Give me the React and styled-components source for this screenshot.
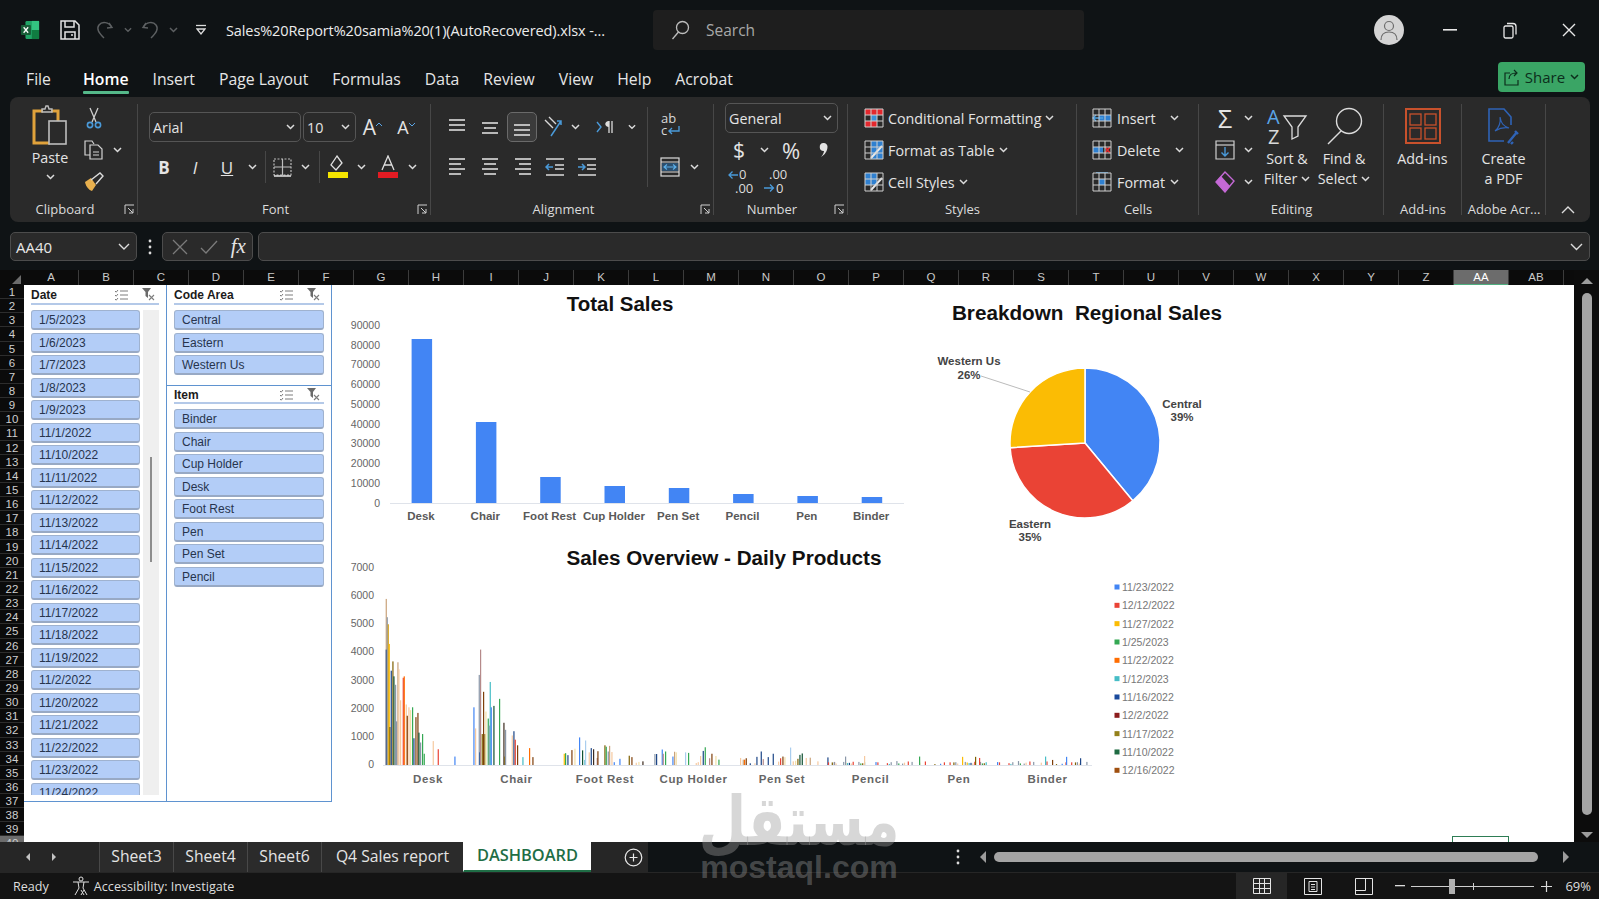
import React from 'react';
import styled, { createGlobalStyle } from 'styled-components';

const UI = '"Open Sans", "Noto Sans", sans-serif';
const ARIAL = '"Liberation Sans", Arial, sans-serif';

const GlobalStyle = createGlobalStyle`
  html, body { margin: 0; padding: 0; background: #0f1315; }
  body { font-family: ${UI}; overflow: hidden; }
  * { box-sizing: border-box; }
`;

const Page = styled.div`
  position: relative;
  width: 1599px;
  height: 899px;
  overflow: hidden;
  background: #0f1315;
  color: #e8e8e8;
  display: flex;
  flex-direction: column;
`;

/* title bar */
const TitleBar = styled.div`
  height: 60px;
  display: flex;
  align-items: center;
`;

const Slot = styled.div`
  width: ${(p) => p.$w}px;
  flex: none;
  height: 100%;
  display: flex;
  align-items: center;
  justify-content: ${(p) => p.$justify || 'center'};
  gap: ${(p) => p.$gap || 0}px;
  margin-left: ${(p) => p.$ml || 0}px;
  padding-left: ${(p) => p.$pl || 0}px;
  padding-right: ${(p) => p.$pr || 0}px;
`;

const DocTitle = styled.div`
  width: 427px;
  flex: none;
  font-size: 14.5px;
  white-space: nowrap;
  color: #ececec;
  letter-spacing: -0.1px;
`;

const SearchBox = styled.div`
  width: 431px;
  height: 40px;
  flex: none;
  background: #1e1e1e;
  border-radius: 4px;
  display: flex;
  align-items: center;
  gap: 16px;
  padding-left: 17px;
  font-size: 15.5px;
  color: #a8a8a8;
`;

const Avatar = styled.div`
  width: 30px;
  height: 30px;
  flex: none;
  margin-left: 290px;
  border-radius: 50%;
  background: #d4d4d4;
  display: flex;
  align-items: center;
  justify-content: center;
`;

/* tabs */
const TabRow = styled.div`
  height: 37px;
  display: flex;
  align-items: center;
  padding-left: 26px;
  font-size: 15.75px;
`;

const Tab = styled.div`
  position: relative;
  margin-right: ${(p) => p.$gap || 24}px;
  height: 37px;
  line-height: 39px;
  color: ${(p) => (p.$active ? '#fff' : '#e6e6e6')};
  font-weight: ${(p) => (p.$active ? 600 : 400)};
  white-space: nowrap;
  &::after {
    content: '';
    display: ${(p) => (p.$active ? 'block' : 'none')};
    position: absolute;
    left: 0;
    right: 0;
    bottom: 3px;
    height: 3px;
    background: #55b98a;
    border-radius: 1px;
  }
`;

const ShareButton = styled.div`
  margin-left: auto;
  margin-right: 14px;
  width: 87px;
  height: 30px;
  margin-top: -4px;
  background: #3aa565;
  border-radius: 4px;
  color: #0c2e1c;
  font-size: 15px;
  display: flex;
  align-items: center;
  justify-content: center;
  gap: 5px;
`;

/* ribbon */
const Ribbon = styled.div`
  height: 125px;
  margin: 0 9px 0 10px;
  background: #2a2a2a;
  border-radius: 8px;
  display: flex;
  font-size: 14.3px;
  color: #e4e4e4;
`;

const Group = styled.div`
  width: ${(p) => p.$w}px;
  flex: none;
  display: flex;
  flex-direction: column;
  position: relative;
  &::after {
    content: '';
    display: ${(p) => (p.$last ? 'none' : 'block')};
    position: absolute;
    right: 0;
    top: 7px;
    bottom: 7px;
    width: 1px;
    background: #474747;
  }
`;

const GroupBody = styled.div`
  flex: 1;
  min-height: 0;
  display: flex;
  padding-left: ${(p) => p.$pad || 0}px;
  padding-top: ${(p) => p.$top ?? 5}px;
`;

const Stack = styled.div`
  display: flex;
  flex-direction: column;
`;

const Row = styled.div`
  height: ${(p) => p.$h || 32}px;
  display: flex;
  align-items: center;
`;

const GroupLabel = styled.div`
  height: 22px;
  margin-bottom: 2px;
  display: flex;
  align-items: center;
  font-size: 13px;
  color: #dcdcdc;
`;

const LabelText = styled.div`
  flex: 1;
  text-align: center;
  white-space: nowrap;
`;

const Launcher = styled.div`
  width: 18px;
  flex: none;
  display: flex;
  justify-content: center;
`;

const BigCol = styled.div`
  width: ${(p) => p.$w}px;
  flex: none;
  display: flex;
  flex-direction: column;
  align-items: center;
  text-align: center;
  line-height: 20px;
  white-space: nowrap;
`;

const BigIcon = styled.div`
  height: ${(p) => p.$h || 44}px;
  display: flex;
  align-items: center;
  justify-content: center;
`;

const TextLine = styled.div`
  display: flex;
  align-items: center;
  gap: 4px;
  white-space: nowrap;
  margin-left: ${(p) => p.$ml || 0}px;
  width: ${(p) => (p.$w ? `${p.$w}px` : 'auto')};
  justify-content: ${(p) => (p.$w ? 'space-between' : 'flex-start')};
`;

const Select = styled.div`
  width: ${(p) => p.$w}px;
  height: 30px;
  flex: none;
  margin-right: ${(p) => p.$mr || 0}px;
  border: 1px solid #555;
  border-radius: 5px;
  display: flex;
  align-items: center;
  justify-content: space-between;
  padding: 0 5px 0 3px;
  font-size: 14.3px;
`;

const Glyph = styled.span`
  font-family: ${(p) => p.$font || UI};
  font-size: ${(p) => p.$size || 17}px;
  font-weight: ${(p) => p.$weight || 400};
  font-style: ${(p) => (p.$italic ? 'italic' : 'normal')};
  color: ${(p) => p.$color || '#e4e4e4'};
  text-decoration: ${(p) => (p.$under ? 'underline' : 'none')};
  line-height: 1;
`;

const Divider = styled.div`
  width: 1px;
  height: 100%;
  background: #474747;
`;

const DividerSlot = styled.div`
  width: ${(p) => p.$w}px;
  flex: none;
  height: ${(p) => p.$h || 100}%;
  display: flex;
  justify-content: center;
`;

const PressedBox = styled.div`
  width: 30px;
  height: 30px;
  border: 1px solid #6a6a6a;
  border-radius: 5px;
  background: #3b3b3b;
  display: flex;
  align-items: flex-end;
  justify-content: center;
  padding-bottom: 4px;
`;

/* formula bar */
const FormulaBar = styled.div`
  height: 29px;
  margin: 10px 9px 9px 10px;
  display: flex;
  align-items: stretch;
`;

const NameBox = styled.div`
  width: 127px;
  flex: none;
  background: #2a2a2a;
  border: 1px solid #4c4c4c;
  border-radius: 5px;
  display: flex;
  align-items: center;
  justify-content: space-between;
  padding: 0 6px 0 5px;
  font-size: 15px;
`;

const FxBox = styled.div`
  width: 91px;
  flex: none;
  background: #2a2a2a;
  border: 1px solid #4c4c4c;
  border-radius: 5px;
  display: flex;
  align-items: center;
  justify-content: space-around;
  padding: 0 0 0 3px;
  margin-right: 5px;
`;

const FormulaInput = styled.div`
  flex: 1;
  background: #2a2a2a;
  border: 1px solid #4c4c4c;
  border-radius: 5px;
  display: flex;
  align-items: center;
  justify-content: flex-end;
  padding-right: 6px;
`;

/* sheet */
const ColumnRow = styled.div`
  height: 15px;
  padding-left: 24px;
  display: flex;
  background: #0b0b0b;
  position: relative;
`;

const Corner = styled.div`
  position: absolute;
  left: 12px;
  bottom: 1px;
  width: 0;
  height: 0;
  border-style: solid;
  border-width: 0 0 9px 9px;
  border-color: transparent transparent #6c6c6c transparent;
`;

const ColHead = styled.div`
  width: 55px;
  flex: none;
  font-family: ${ARIAL};
  font-size: 11.5px;
  line-height: 15px;
  text-align: center;
  color: ${(p) => (p.$on ? '#fff' : '#c9c9c9')};
  background: ${(p) => (p.$on ? '#6c6c6c' : 'transparent')};
  border-right: 1px solid #3c3c3c;
  box-shadow: ${(p) => (p.$on ? 'inset 0 -1px 0 #4fae7f' : 'none')};
`;

const SheetRow = styled.div`
  height: 557px;
  display: flex;
  position: relative;
`;

const RowHeads = styled.div`
  width: 24px;
  flex: none;
  background: #0b0b0b;
  overflow: hidden;
`;

const RowHead = styled.div`
  height: 14.15px;
  font-family: ${ARIAL};
  font-size: 11.5px;
  line-height: 14px;
  text-align: center;
  color: #cfcfcf;
  background: ${(p) => (p.$on ? '#6c6c6c' : 'transparent')};
  border-bottom: 1px solid #2d2d2d;
`;

const Canvas = styled.div`
  width: 1550px;
  flex: none;
  background: #fff;
  position: relative;
  display: flex;
  align-items: flex-start;
  color: #222;
  font-family: ${ARIAL};
`;

const DatePanel = styled.div`
  width: 142px;
  height: 517px;
  flex: none;
  padding: 0 7px;
  border-bottom: 1.5px solid #5f93d0;
  overflow: hidden;
`;

const CodePanel = styled.div`
  width: 166px;
  height: 517px;
  flex: none;
  padding: 0 7px;
  border: 1px solid #5f93d0;
  border-top: none;
  position: relative;
`;

const SlicerHeader = styled.div`
  height: ${(p) => p.$h || 20}px;
  border-bottom: 2px solid #b4c9e8;
  display: flex;
  align-items: center;
  padding-top: 1px;
  font-size: 12px;
  font-weight: 700;
  color: #1b1b1b;
`;

const SlicerTitle = styled.div`
  flex: 1;
`;

const SlicerIcon = styled.div`
  width: ${(p) => p.$w}px;
  flex: none;
  display: flex;
  justify-content: center;
`;

const ButtonList = styled.div`
  display: flex;
  flex-direction: column;
  gap: 2.5px;
  padding-top: 5px;
  overflow: hidden;
  flex: ${(p) => (p.$fill ? 1 : 'none')};
`;

const SlicerButton = styled.div`
  height: 20px;
  flex: none;
  background: #b3cdf7;
  border: 1px solid #9fb2cf;
  border-bottom: 2px solid #98a9c4;
  border-radius: 3px;
  padding-left: 7px;
  font-size: 12px;
  line-height: 18px;
  color: #27344d;
`;

const DateBody = styled.div`
  display: flex;
  gap: 3px;
  height: 490px;
`;

const ScrollTrack = styled.div`
  width: 16px;
  flex: none;
  margin-top: 5px;
  background: #efefef;
  display: flex;
  justify-content: center;
  padding-top: 147px;
`;

const ScrollLine = styled.div`
  width: 2px;
  height: 105px;
  background: #8d8d8d;
`;

const CodeTop = styled.div`
  height: 101px;
  margin: 0 -7px;
  padding: 0 7px;
  border-bottom: 1px solid #5f93d0;
`;

const ChartGrid = styled.div`
  flex: none;
  display: grid;
  grid-template-columns: 600px 318px;
  grid-template-rows: 260px 297px;
`;

const ChartSvg = styled.svg`
  display: block;
  grid-column: ${(p) => p.$col || 'auto'};
  font-family: ${ARIAL};
`;

const SelectedCell = styled.div`
  position: absolute;
  right: 65px;
  bottom: 0;
  width: 57px;
  height: 6px;
  border: 1px solid #2e7d55;
  border-bottom: none;
`;

const VScroll = styled.div`
  flex: 1;
  background: #0c0c0c;
  display: flex;
  flex-direction: column;
  align-items: center;
  padding-top: 8px;
  margin-top: -15px;
  z-index: 1;
`;

const VThumb = styled.div`
  width: 10px;
  height: 522px;
  margin: 9px 0 17px;
  background: #a4a4a4;
  border-radius: 5px;
  flex: none;
`;

/* sheet tabs */
const SheetTabs = styled.div`
  height: 30px;
  display: flex;
  align-items: stretch;
  background: #0f1315;
`;

const TabStrip = styled.div`
  width: 648px;
  flex: none;
  background: #262626;
  display: flex;
  align-items: stretch;
`;

const SheetTab = styled.div`
  width: ${(p) => p.$w}px;
  flex: none;
  display: flex;
  align-items: center;
  justify-content: center;
  padding-bottom: 3px;
  font-size: ${(p) => (p.$active ? 16.4 : 15.7)}px;
  font-weight: ${(p) => (p.$active ? 600 : 400)};
  color: ${(p) => (p.$active ? '#1f6e46' : '#e4e4e4')};
  background: ${(p) => (p.$active ? '#fff' : '#2b2b2b')};
  border-left: 1px solid ${(p) => (p.$active ? '#fff' : '#484848')};
  border-bottom: ${(p) => (p.$active ? '2px solid #1f6e46' : 'none')};
  white-space: nowrap;
`;

const HScrollZone = styled.div`
  flex: 1;
  display: flex;
  align-items: center;
`;

const HThumb = styled.div`
  width: 544px;
  height: 10px;
  background: #a4a4a4;
  border-radius: 5px;
  flex: none;
`;

/* status bar */
const StatusBar = styled.div`
  flex: 1;
  display: flex;
  align-items: center;
  background: #141414;
  border-top: 1px solid #262626;
  padding-left: 13px;
  font-size: 12.6px;
  color: #dedede;
`;

const ViewTab = styled.div`
  width: 51px;
  height: 100%;
  flex: none;
  display: flex;
  align-items: center;
  justify-content: center;
  background: ${(p) => (p.$on ? '#262626' : 'transparent')};
`;

const ZoomTrack = styled.div`
  width: 123px;
  height: 1px;
  flex: none;
  background: #cfcfcf;
  position: relative;
`;

const ZoomThumb = styled.div`
  position: absolute;
  left: 38px;
  top: -7px;
  width: 6px;
  height: 15px;
  background: #b0b0b0;
`;

const ZoomTick = styled.div`
  position: absolute;
  left: 62px;
  top: -3px;
  width: 1px;
  height: 7px;
  background: #cfcfcf;
`;

const ZoomValue = styled.span`
  margin-left: 7px;
  font-size: 13px;
`;

/* watermark lies over the page */
const Watermark = styled.div`
  position: absolute;
  left: 695px;
  top: 792px;
  width: 208px;
  display: flex;
  flex-direction: column;
  align-items: center;
  color: rgba(155, 155, 155, 0.4);
  pointer-events: none;
  z-index: 5;
`;

const WatermarkArabic = styled.div`
  font-family: "DejaVu Sans", sans-serif;
  font-weight: 700;
  font-size: 55px;
  line-height: 58px;
  white-space: nowrap;
  transform: scaleY(1.25);
`;

const WatermarkLatin = styled.div`
  font-family: ${ARIAL};
  font-weight: 700;
  font-size: 32px;
  line-height: 34px;
  white-space: nowrap;
`;

/* small drawings */
const Chev = ({ color = '#dcdcdc', w = 9 }) => (
  <svg width={w} height="6" viewBox="0 0 9 6" fill="none"><path d="M1 1l3.5 3.5L8 1" stroke={color} strokeWidth="1.5" /></svg>
);

const Ico = ({ w = 20, h = 20, children, stroke = '#dcdcdc', sw = 1.2 }) => (
  <svg width={w} height={h} viewBox={`0 0 ${w} ${h}`} fill="none" stroke={stroke} strokeWidth={sw}>{children}</svg>
);

const ExcelIcon = () => (
  <svg width="22" height="22" viewBox="0 0 22 22">
    <rect x="6" y="1" width="15" height="20" rx="1.5" fill="#21a366" />
    <rect x="13" y="1" width="8" height="10" fill="#33c481" />
    <rect x="13" y="11" width="8" height="10" fill="#107c41" />
    <rect x="1" y="5.5" width="11" height="11" rx="1" fill="#185c37" />
    <path d="M4 8l5 6M9 8l-5 6" stroke="#fff" strokeWidth="1.4" />
  </svg>
);

const SaveIcon = () => (
  <Ico w={20} h={20} stroke="#e4e4e4" sw={1.5}>
    <path d="M1 1h14l4 4v14H1z" /><path d="M5 1v6h9V1M5 19v-7h10v7" /><path d="M11 15h2" />
  </Ico>
);

const RedoIcon = ({ flip }) => (
  <svg width="18" height="20" viewBox="0 0 18 20" fill="none" stroke="#5d6062" strokeWidth="1.4">
    <g transform={flip ? 'translate(18 0) scale(-1 1)' : undefined}>
      <path d="M13 3L16 7.5 11 8" /><path d="M15.5 7C13 2 6 1 3 5c-3 4 0 8 5 13" />
    </g>
  </svg>
);

const SearchIcon = () => (
  <Ico w={20} h={20} stroke="#bdbdbd" sw={1.3}><circle cx="12.5" cy="7.5" r="6" /><path d="M8.5 12L2.5 19" /></Ico>
);

const PersonIcon = () => (
  <svg width="18" height="22" viewBox="0 0 18 22" fill="none" stroke="#6d6d6d" strokeWidth="1.2">
    <circle cx="9" cy="7" r="4.5" /><path d="M1 21c0-6 3-8 8-8s8 2 8 8" />
  </svg>
);

const PasteIcon = () => (
  <svg width="36" height="40" viewBox="0 0 36 40" fill="none">
    <path d="M11 6H2v32h16" stroke="#e0a23b" strokeWidth="3" />
    <path d="M19 6h7v10" stroke="#e0a23b" strokeWidth="3" />
    <path d="M10 7V4h3l1-3h2l1 3h3v3z" stroke="#bdbdbd" strokeWidth="1.4" />
    <rect x="17" y="16" width="17" height="23" stroke="#bdbdbd" strokeWidth="1.6" fill="#2a2a2a" />
  </svg>
);

const ScissorsIcon = () => (
  <svg width="16" height="22" viewBox="0 0 16 22" fill="none">
    <path d="M4 1l6 14M12 1L6 15" stroke="#cfcfcf" strokeWidth="1.3" />
    <circle cx="4" cy="18" r="2.6" stroke="#4a9ad9" strokeWidth="1.6" /><circle cx="12" cy="18" r="2.6" stroke="#4a9ad9" strokeWidth="1.6" />
  </svg>
);

const CopyIcon = () => (
  <Ico w={20} h={20} stroke="#d4d4d4">
    <path d="M6 15H1V1h7l2 3" /><path d="M6 5h8l4 4v10H6z" /><path d="M9 12h6M9 15h6" />
  </Ico>
);

const PainterIcon = () => (
  <svg width="22" height="20" viewBox="0 0 22 20" fill="none">
    <path d="M2 10l6-4 5 7-4 6c-3-1-6-4-7-9z" fill="#e8b04e" />
    <path d="M8 8l9-7 3 3-7 8" stroke="#dcdcdc" strokeWidth="1.4" />
  </svg>
);

const LauncherIcon = () => (
  <svg width="11" height="11" viewBox="0 0 11 11" fill="none" stroke="#cfcfcf" strokeWidth="1">
    <path d="M1 10V1h9" /><path d="M4 4l5 5M9 5v4H5" />
  </svg>
);

const BorderIcon = () => (
  <Ico w={19} h={19} stroke="#bdbdbd">
    <path d="M1 1h17v16H1z" strokeDasharray="2 1.5" /><path d="M9.5 1v16M1 9h17" /><path d="M1 18h17" stroke="#e4e4e4" strokeWidth="1.5" />
  </Ico>
);

const FillIcon = () => (
  <svg width="22" height="24" viewBox="0 0 22 24" fill="none">
    <path d="M10 1l-6 9 5 5 6-7z" stroke="#e0e0e0" strokeWidth="1.3" />
    <rect x="1" y="17" width="20" height="6" fill="#f4e400" />
  </svg>
);

const FontColorIcon = () => (
  <svg width="22" height="24" viewBox="0 0 22 24" fill="none">
    <path d="M5 15L11 1l6 14M7.5 10h7" stroke="#e0e0e0" strokeWidth="1.3" />
    <rect x="1" y="17" width="20" height="6" fill="#e31b23" />
  </svg>
);

const Lines = ({ rows }) => (
  <Ico w={20} h={20} stroke="#dcdcdc" sw={1.6}>
    {rows.map((r, i) => <path key={i} d={`M${r[0]} ${r[2]}H${r[1]}`} />)}
  </Ico>
);

const OrientIcon = () => (
  <svg width="22" height="22" viewBox="0 0 22 22" fill="none">
    <path d="M3 4l8 8M7 1l7 7" stroke="#d8d8d8" strokeWidth="1.4" />
    <path d="M9 20L19 5M15 5h4v4" stroke="#4a9ad9" strokeWidth="1.5" />
  </svg>
);

const RtlIcon = () => (
  <svg width="18" height="16" viewBox="0 0 18 16" fill="none">
    <path d="M1 3l4 5-4 5" stroke="#4a9ad9" strokeWidth="1.4" />
    <path d="M13 2v12M16 2v12" stroke="#dcdcdc" strokeWidth="1.3" /><path d="M13 2c-5 0-5 6 0 6" fill="#dcdcdc" />
  </svg>
);

const IndentIcon = ({ out }) => (
  <Ico w={20} h={20} stroke="#dcdcdc" sw={1.5}>
    <path d="M1 2h18M1 18h18M10 8h9M10 12h9" />
    <path d={out ? 'M8 10H1M4 7l-3 3 3 3' : 'M1 10h7M5 7l3 3-3 3'} stroke="#4a9ad9" />
  </Ico>
);

const WrapIcon = () => (
  <svg width="22" height="32" viewBox="0 0 22 32" fill="none">
    <text x="1" y="12" fontSize="13" fill="#d8d8d8" fontFamily={UI} stroke="none">ab</text>
    <text x="1" y="24" fontSize="13" fill="#d8d8d8" fontFamily={UI} stroke="none">c</text>
    <path d="M19 15v5H9M12 17l-3 3 3 3" stroke="#4a9ad9" strokeWidth="1.4" />
  </svg>
);

const MergeIcon = () => (
  <svg width="20" height="20" viewBox="0 0 20 20" fill="none">
    <rect x="1" y="1" width="18" height="18" stroke="#dcdcdc" strokeWidth="1.2" />
    <path d="M1 5h18M1 15h18" stroke="#dcdcdc" />
    <rect x="2" y="6" width="16" height="8" fill="#2c4f6e" />
    <path d="M4 10h12M7 7.5L4 10l3 2.5M13 7.5l3 2.5-3 2.5" stroke="#5db0ea" strokeWidth="1.1" />
  </svg>
);

const CommaIcon = () => (
  <svg width="10" height="16" viewBox="0 0 10 16" fill="#e4e4e4">
    <path d="M4.5 1a3.6 3.6 0 0 1 4 3.6c0 4.4-2.6 8.4-6.5 10.4 1.8-2.2 2.8-4 3-6A3.9 3.9 0 0 1 4.5 1z" />
  </svg>
);

const DecimalIcon = ({ more }) => (
  <svg width="30" height="30" viewBox="0 0 30 30" fill="none">
    <text x={more ? 9 : 13} y="12" fontSize="13" fill="#dcdcdc" fontFamily={UI} stroke="none">{more ? '.00' : '0'}</text>
    <text x={more ? 16 : 9} y="26" fontSize="13" fill="#dcdcdc" fontFamily={UI} stroke="none">{more ? '0' : '.00'}</text>
    {more
      ? <path d="M4 21h9M10 17.5l3.5 3.5-3.5 3.5" stroke="#4a9ad9" strokeWidth="1.3" />
      : <path d="M12 8H3M6.5 4.5L3 8l3.5 3.5" stroke="#4a9ad9" strokeWidth="1.3" />}
  </svg>
);

const GridBase = ({ children }) => (
  <svg width="20" height="20" viewBox="0 0 20 20" fill="none">
    {children}
    <path d="M1 1h18v18H1zM1 7h18M1 13h18M7 1v18M13 1v18" stroke="#cfcfcf" strokeWidth="1" />
  </svg>
);

const CondIcon = () => (
  <GridBase>
    <rect x="1" y="1" width="18" height="6" fill="#e3272d" /><rect x="7" y="7" width="6" height="6" fill="#3c8fd8" /><rect x="1" y="13" width="12" height="6" fill="#e3272d" />
  </GridBase>
);

const TableStyleIcon = ({ fill }) => (
  <GridBase>
    <rect x={fill ? 1 : 7} y="1" width={12} height={fill ? 12 : 18} fill="#2f80d0" />
    <path d="M7 18L18 6" stroke="#e8e8e8" strokeWidth="2" />
  </GridBase>
);

const InsertCellIcon = () => (
  <GridBase><rect x="7" y="7" width="12" height="6" fill="#2f80d0" /><path d="M11 10H1M4 7l-3 3 3 3" stroke="#4fa3e3" strokeWidth="1.4" /></GridBase>
);

const DeleteCellIcon = () => (
  <GridBase><rect x="1" y="7" width="10" height="6" fill="#2f80d0" /><path d="M13 7l5 6M18 7l-5 6" stroke="#e3272d" strokeWidth="1.7" /></GridBase>
);

const FormatCellIcon = () => (
  <GridBase><rect x="7" y="7" width="6" height="6" fill="#2f80d0" /><path d="M4 0h12" stroke="#4fa3e3" strokeWidth="1.6" /></GridBase>
);

const FillDownIcon = () => (
  <Ico w={20} h={20} stroke="#cfcfcf">
    <path d="M1 1h18v18H1z" /><path d="M1 5h18" /><path d="M10 7v9M6.5 12.5l3.5 3.5 3.5-3.5" stroke="#4a9ad9" strokeWidth="1.4" />
  </Ico>
);

const EraserIcon = () => (
  <svg width="20" height="22" viewBox="0 0 20 22" fill="none">
    <path d="M10 1l9 9-9 11L1 11z" stroke="#c569d6" strokeWidth="1.4" />
    <path d="M1 11l5-6 9 10-5 6z" fill="#c569d6" />
  </svg>
);

const SortIcon = () => (
  <svg width="42" height="40" viewBox="0 0 42 40" fill="none">
    <text x="1" y="18" fontSize="20" fill="#5aa5e6" fontFamily={UI} stroke="none">A</text>
    <text x="2" y="38" fontSize="20" fill="#d8d8d8" fontFamily={UI} stroke="none">Z</text>
    <path d="M18 10h22l-8 11v9l-6 3V21z" stroke="#dcdcdc" strokeWidth="1.3" />
  </svg>
);

const FindIcon = () => (
  <Ico w={38} h={38} stroke="#dcdcdc" sw={1.4}><circle cx="24" cy="14" r="12.5" /><path d="M16 24L3 37" /></Ico>
);

const AddinsIcon = () => (
  <svg width="36" height="36" viewBox="0 0 36 36" fill="none" stroke="#c8512c" strokeWidth="2">
    <rect x="1" y="1" width="34" height="34" /><rect x="5" y="6" width="11" height="11" strokeWidth="1.3" /><rect x="20" y="6" width="11" height="11" strokeWidth="1.3" /><rect x="5" y="20" width="11" height="11" strokeWidth="1.3" /><rect x="20" y="20" width="11" height="11" strokeWidth="1.3" />
  </svg>
);

const PdfIcon = () => (
  <svg width="36" height="38" viewBox="0 0 36 38" fill="none">
    <path d="M18 34H3V2h15l7 8v8" stroke="#2f63b6" strokeWidth="1.6" />
    <path d="M9 24c4-3 6-9 5-14 1 6 3 9 9 11-5-1-9 0-14 3z" stroke="#2f63b6" strokeWidth="1.2" />
    <path d="M22 36l9-11M25 37l2-2M29 24l3 3" stroke="#2f63b6" strokeWidth="2.4" />
  </svg>
);

const ShareIcon = () => (
  <svg width="16" height="18" viewBox="0 0 16 18" fill="none" stroke="#0c2e1c" strokeWidth="1.2">
    <path d="M6 5H1v12h13v-5" /><path d="M5 11c0-4 3-6 7-6M10 2l3 3-3 3" />
  </svg>
);

const PlusCircle = () => (
  <svg width="19" height="19" viewBox="0 0 19 19" fill="none" stroke="#e8e8e8" strokeWidth="1.2">
    <circle cx="9.5" cy="9.5" r="8.3" /><path d="M5.5 9.5h8M9.5 5.5v8" />
  </svg>
);

const Triangle = ({ dir, color = '#9c9c9c', size = 6 }) => {
  const s = { left: `${size},0 ${size},${size * 2} 0,${size}`, right: `0,0 0,${size * 2} ${size},${size}`, up: `0,${size} ${size * 2},${size} ${size},0`, down: `0,0 ${size * 2},0 ${size},${size}` };
  const horiz = dir === 'left' || dir === 'right';
  return (
    <svg width={horiz ? size : size * 2} height={horiz ? size * 2 : size}><polygon points={s[dir]} fill={color} /></svg>
  );
};

const Dots = () => (
  <svg width="4" height="16" viewBox="0 0 4 16" fill="#dcdcdc"><circle cx="2" cy="2" r="1.4" /><circle cx="2" cy="8" r="1.4" /><circle cx="2" cy="14" r="1.4" /></svg>
);

const MultiSelectIcon = () => (
  <Ico w={14} h={12} stroke="#7d7d7d" sw={1}>
    <path d="M1 2l1.2 1.2L4 1M1 6l1.2 1.2L4 5M1 10l1.2 1.2L4 9" /><path d="M6 2h8M6 6h8M6 10h8" />
  </Ico>
);

const ClearFilterIcon = () => (
  <svg width="14" height="13" viewBox="0 0 14 13" fill="none">
    <path d="M0 0h9L6 4v6L3.5 8V4z" fill="#6a6a6a" /><path d="M7 7l5 5M12 7l-5 5" stroke="#7d7d7d" strokeWidth="1.1" />
  </svg>
);

const AccessibilityIcon = () => (
  <svg width="18" height="20" viewBox="0 0 18 20" fill="none" stroke="#dedede" strokeWidth="1">
    <circle cx="9" cy="3" r="2" /><path d="M1 6h16M6 6l1 6-4 7M12 6l-1 6 4 7" /><path d="M9 14l3 5M12 14l-3 5" />
  </svg>
);

/* chart data */
const CATS = ['Desk', 'Chair', 'Foot Rest', 'Cup Holder', 'Pen Set', 'Pencil', 'Pen', 'Binder'];
const SALES = [164, 81, 26, 17, 15, 9, 7, 6];
const C = {
  bl: '#4285f4', re: '#ea4335', ye: '#fbbc04', gr: '#34a853', or: '#ff6d01', te: '#46bdc6', na: '#1c4587', ma: '#85200c',
  ol: '#7f6000', dg: '#0f5132', br: '#7f3f0a', pe: '#f6c9a0', tn: '#c9a27a', gy: '#8a97a8', mv: '#b58a8a', lb: '#a9cdee', pa: '#f3dfa8',
};
const LEGEND = [
  ['11/23/2022', C.bl], ['12/12/2022', C.re], ['11/27/2022', C.ye], ['1/25/2023', C.gr], ['11/22/2022', C.or], ['1/12/2023', C.te],
  ['11/16/2022', '#1a4a9c'], ['12/2/2022', '#8c1d1d'], ['11/17/2022', '#94801a'], ['11/10/2022', '#1f6b42'], ['12/16/2022', '#a0500f'],
];

/* [x in 3x crop, value, colour] */
const DAILY = [
  [137, 5900, C.tn], [137, 4100, C.na], [140, 5250, C.gy], [143, 5000, '#d4a017'], [146, 4300, C.ye], [148, 1350, C.ol], [152, 3350, C.na], [157, 3680, C.ol], [160, 3150, C.dg],
  [165, 2850, C.gy], [168, 1550, C.gy], [172, 3650, C.tn], [175, 3400, C.pe], [180, 2300, C.pe], [188, 3100, C.re], [191, 3150, C.or], [197, 2150, C.pe], [200, 1750, C.br],
  [205, 2050, C.pe], [210, 1950, C.pa], [216, 2050, C.gr], [220, 950, C.na], [226, 1700, C.br], [232, 1850, C.br], [235, 1150, C.dg], [240, 800, C.gy], [246, 1100, C.gr], [251, 400, C.gr],
  [278, 850, C.pe], [293, 560, C.re], [343, 300, C.bl],
  [400, 2050, C.bl], [405, 1300, C.pe], [416, 3200, C.gy], [418, 450, C.na], [420, 4100, C.mv], [425, 1100, C.ol], [429, 2600, C.br], [433, 1100, C.ol], [436, 1900, C.pa], [443, 1650, C.gr],
  [446, 1400, C.gy], [449, 2950, C.te], [452, 2050, C.bl], [460, 2100, C.dg], [477, 2350, C.gr], [490, 1500, '#3d2b1f'], [493, 300, C.ol], [495, 1250, C.gy], [515, 1050, C.pe], [520, 1200, C.na],
  [524, 900, C.re], [531, 700, C.br], [547, 280, C.te], [567, 600, C.or], [577, 280, C.br],
  [671, 400, C.ye], [675, 420, C.gr], [682, 350, C.na], [694, 530, C.br], [703, 580, C.pa], [717, 980, C.bl], [726, 520, C.dg], [733, 180, C.te], [735, 870, C.lb], [746, 450, C.pe], [752, 600, C.na],
  [759, 560, '#3d2b1f'], [770, 250, C.mv], [772, 490, C.br], [793, 700, C.ol], [797, 650, C.gr], [803, 480, C.gy], [807, 680, C.tn], [814, 460, C.pe], [821, 100, C.bl], [838, 220, C.bl], [866, 330, C.ol],
  [874, 280, C.br], [887, 80, C.pe], [895, 110, C.pa], [907, 130, '#3d2b1f'],
  [943, 390, C.gy], [948, 390, C.na], [965, 550, C.bl], [968, 400, C.mv], [975, 480, C.gr], [997, 300, C.bl], [1002, 470, C.tn], [1007, 450, C.pa], [1035, 450, C.lb], [1044, 430, C.gr], [1067, 70, C.pe],
  [1073, 100, C.pe], [1080, 320, C.pe], [1088, 500, C.na], [1094, 630, C.gr], [1107, 240, C.mv], [1114, 400, C.br], [1126, 320, C.pa], [1135, 190, C.gr],
  [1200, 250, C.pe], [1208, 190, C.tn], [1212, 190, C.or], [1217, 240, C.br], [1229, 60, C.na], [1243, 60, C.pe], [1249, 290, C.na], [1262, 480, C.na], [1268, 210, C.mv], [1283, 280, C.na], [1298, 400, C.na],
  [1314, 120, C.pe], [1320, 240, C.re], [1327, 300, C.br], [1333, 280, C.pa], [1350, 620, C.lb], [1358, 130, C.pe], [1365, 150, C.pa], [1372, 220, C.ol], [1378, 360, C.dg], [1385, 410, C.dg], [1397, 250, C.pe],
  [1409, 260, C.tn], [1432, 130, C.pe], [1462, 270, C.na], [1482, 110, C.mv],
];

function tailBars() {
  // small noisy bars for Pencil, Pen and Binder
  const palette = [C.gy, C.br, C.ol, C.pe, C.bl, C.re, C.gr, C.na, C.te, C.ye];
  const spikes = { 864: 320, 845: 300, 919: 300, 962: 290, 975: 290, 979: 250, 1045: 300, 1052: 180, 1066: 290, 1080: 240 };
  const out = [];
  let seed = 7;
  for (let x = 826; x < 1088; x += 1.9) {
    seed = (seed * 73 + 41) % 257;
    const v = seed % 3 === 0 ? 20 + (seed % 90) : seed % 5 === 0 ? 90 + (seed % 60) : 0;
    if (v) out.push([x, v, palette[seed % palette.length]]);
  }
  Object.keys(spikes).forEach((k, i) => out.push([+k, spikes[k], palette[(i * 3) % palette.length]]));
  return out;
}

function slice(cx, cy, r, a0, a1) {
  const p = (a) => [cx + r * Math.sin(a * Math.PI / 180), cy - r * Math.cos(a * Math.PI / 180)];
  const [x0, y0] = p(a0);
  const [x1, y1] = p(a1);
  return `M${cx} ${cy}L${x0} ${y0}A${r} ${r} 0 ${a1 - a0 > 180 ? 1 : 0} 1 ${x1} ${y1}Z`;
}

function TotalSales() {
  return (
    <ChartSvg width="600" height="260" viewBox="332 285 600 260">
      <text x="620" y="311" textAnchor="middle" fontSize="20.5" fontWeight="700" fill="#111">Total Sales</text>
      {[...Array(10)].map((_, i) => (
        <text key={i} x="380" y={503 - i * 19.72 + 3.5} textAnchor="end" fontSize="10.5" fill="#666">{i * 10000}</text>
      ))}
      <line x1="390" x2="904" y1="503.5" y2="503.5" stroke="#dfe3ea" />
      {SALES.map((h, i) => (
        <rect key={i} x={411.6 + i * 64.3} y={503 - h} width="20.5" height={h} fill="#4285f4" />
      ))}
      {CATS.map((c, i) => (
        <text key={c} x={421 + i * 64.3} y="520" textAnchor="middle" fontSize="11.5" fontWeight="700" fill="#595959">{c}</text>
      ))}
    </ChartSvg>
  );
}

function RegionalSales() {
  return (
    <ChartSvg width="318" height="260" viewBox="932 285 318 260">
      <text x="1087" y="320" textAnchor="middle" fontSize="20.7" fontWeight="700" fill="#111" xmlSpace="preserve">Breakdown  Regional Sales</text>
      <path d={slice(1085, 443, 75, 0, 140.4)} fill="#4285f4" stroke="#fff" strokeWidth="1.5" />
      <path d={slice(1085, 443, 75, 140.4, 266.4)} fill="#ea4335" stroke="#fff" strokeWidth="1.5" />
      <path d={slice(1085, 443, 75, 266.4, 360)} fill="#fbbc04" stroke="#fff" strokeWidth="1.5" />
      <line x1="981" y1="376" x2="1030" y2="392" stroke="#bbb" />
      <g fontSize="11.5" fontWeight="700" fill="#444" textAnchor="middle">
        <text x="969" y="365">Western Us</text>
        <text x="969" y="379">26%</text>
        <text x="1182" y="408">Central</text>
        <text x="1182" y="421">39%</text>
        <text x="1030" y="528">Eastern</text>
        <text x="1030" y="541">35%</text>
      </g>
    </ChartSvg>
  );
}

function DailyOverview() {
  const bars = [...DAILY.map(([x, v, c]) => [340 + x / 3, v, c]), ...tailBars()];
  return (
    <ChartSvg $col="1 / 3" width="918" height="297" viewBox="332 545 918 297">
      <text x="724" y="565" textAnchor="middle" fontSize="20.7" fontWeight="700" fill="#111">Sales Overview - Daily Products</text>
      {[...Array(8)].map((_, i) => (
        <text key={i} x="374" y={764.5 - i * 28.15 + 3.5} textAnchor="end" fontSize="10.5" fill="#666">{i * 1000}</text>
      ))}
      <line x1="383" x2="1092" y1="765.5" y2="765.5" stroke="#dfe3ea" />
      {bars.map(([x, v, c], i) => (
        <rect key={i} x={x} y={765 - v * 0.02815} width="1.2" height={v * 0.02815} fill={c} />
      ))}
      {CATS.map((c, i) => (
        <text key={c} x={428 + i * 88.5} y="783" textAnchor="middle" fontSize="11.5" fontWeight="700" letterSpacing="0.6" fill="#666">{c}</text>
      ))}
      {LEGEND.map(([label, color], i) => (
        <g key={label}>
          <rect x="1114.5" y={584.5 + i * 18.33} width="5" height="5" fill={color} />
          <text x="1122" y={591 + i * 18.33} fontSize="10.5" fill="#777">{label}</text>
        </g>
      ))}
    </ChartSvg>
  );
}

const COLUMNS = 'A B C D E F G H I J K L M N O P Q R S T U V W X Y Z AA AB'.split(' ');
const DATES = ['1/5/2023', '1/6/2023', '1/7/2023', '1/8/2023', '1/9/2023', '11/1/2022', '11/10/2022', '11/11/2022', '11/12/2022', '11/13/2022', '11/14/2022', '11/15/2022', '11/16/2022', '11/17/2022', '11/18/2022', '11/19/2022', '11/2/2022', '11/20/2022', '11/21/2022', '11/22/2022', '11/23/2022', '11/24/2022'];
const AREAS = ['Central', 'Eastern', 'Western Us'];
const ITEMS = ['Binder', 'Chair', 'Cup Holder', 'Desk', 'Foot Rest', 'Pen', 'Pen Set', 'Pencil'];

function SlicerHead({ title, h }) {
  return (
    <SlicerHeader $h={h}>
      <SlicerTitle>{title}</SlicerTitle>
      <SlicerIcon $w={36}><MultiSelectIcon /></SlicerIcon>
      <SlicerIcon $w={20}><ClearFilterIcon /></SlicerIcon>
    </SlicerHeader>
  );
}

function Ribbons() {
  return (
    <Ribbon>
      <Group $w={128}>
        <GroupBody $pad={10}>
          <BigCol $w={60}>
            <BigIcon $h={46}><PasteIcon /></BigIcon>
            Paste
            <BigIcon $h={18}><Chev /></BigIcon>
          </BigCol>
          <Stack>
            <Row><Slot $w={28}><ScissorsIcon /></Slot></Row>
            <Row><Slot $w={28}><CopyIcon /></Slot><Slot $w={18}><Chev /></Slot></Row>
            <Row><Slot $w={28}><PainterIcon /></Slot></Row>
          </Stack>
        </GroupBody>
        <GroupLabel><LabelText>Clipboard</LabelText><Launcher><LauncherIcon /></Launcher></GroupLabel>
      </Group>

      <Group $w={293}>
        <GroupBody $pad={11} $top={10}>
          <Stack>
            <Row $h={40}>
              <Select $w={152} $mr={2}>Arial<Chev /></Select>
              <Select $w={53}>10<Chev /></Select>
              <Slot $w={33}><Glyph $size={21}>A</Glyph><svg width="6" height="12"><path d="M0 5l3-3 3 3" fill="none" stroke="#5aa5e6" /></svg></Slot>
              <Slot $w={34}><Glyph $size={18}>A</Glyph><svg width="6" height="12"><path d="M0 2l3 3 3-3" fill="none" stroke="#5aa5e6" /></svg></Slot>
            </Row>
            <Row $h={40}>
              <Slot $w={30}><Glyph $size={17} $weight={700}>B</Glyph></Slot>
              <Slot $w={32}><Glyph $size={17} $italic>I</Glyph></Slot>
              <Slot $w={32}><Glyph $size={17} $under>U</Glyph></Slot>
              <Slot $w={18}><Chev /></Slot>
              <DividerSlot $w={8} $h={80}><Divider /></DividerSlot>
              <Slot $w={26}><BorderIcon /></Slot>
              <Slot $w={20}><Chev /></Slot>
              <DividerSlot $w={8} $h={80}><Divider /></DividerSlot>
              <Slot $w={30}><FillIcon /></Slot>
              <Slot $w={16}><Chev /></Slot>
              <Slot $w={38}><FontColorIcon /></Slot>
              <Slot $w={10}><Chev /></Slot>
            </Row>
          </Stack>
        </GroupBody>
        <GroupLabel><LabelText>Font</LabelText><Launcher><LauncherIcon /></Launcher></GroupLabel>
      </Group>

      <Group $w={283}>
        <GroupBody $pad={9} $top={10}>
          <Stack>
            <Row $h={40}>
              <Slot $w={33}><Lines rows={[[2, 18, 3], [2, 18, 8], [2, 18, 13]]} /></Slot>
              <Slot $w={33}><Lines rows={[[2, 18, 6], [4, 16, 11], [2, 18, 16]]} /></Slot>
              <Slot $w={32}><PressedBox><Lines rows={[[2, 18, 8], [2, 18, 13], [2, 18, 18]]} /></PressedBox></Slot>
              <Slot $w={30}><OrientIcon /></Slot>
              <Slot $w={14}><Chev /></Slot>
              <Slot $w={46}><RtlIcon /></Slot>
              <Slot $w={8}><Chev /></Slot>
              <DividerSlot $w={22}><Divider /></DividerSlot>
              <Slot $w={26}><WrapIcon /></Slot>
            </Row>
            <Row $h={40}>
              <Slot $w={33}><Lines rows={[[2, 18, 2], [2, 14, 7], [2, 18, 12], [2, 14, 17]]} /></Slot>
              <Slot $w={33}><Lines rows={[[2, 18, 2], [4, 16, 7], [2, 18, 12], [4, 16, 17]]} /></Slot>
              <Slot $w={33}><Lines rows={[[2, 18, 2], [6, 18, 7], [2, 18, 12], [6, 18, 17]]} /></Slot>
              <Slot $w={31}><IndentIcon out /></Slot>
              <Slot $w={33}><IndentIcon /></Slot>
              <Slot $w={40} />
              <DividerSlot $w={8}><Divider /></DividerSlot>
              <Slot $w={38}><MergeIcon /></Slot>
              <Slot $w={10}><Chev /></Slot>
            </Row>
          </Stack>
        </GroupBody>
        <GroupLabel><LabelText>Alignment</LabelText><Launcher><LauncherIcon /></Launcher></GroupLabel>
      </Group>

      <Group $w={134}>
        <GroupBody $pad={11}>
          <Stack>
            <Row><Select $w={113}>General<Chev /></Select></Row>
            <Row>
              <Slot $w={28}><Glyph $size={21}>$</Glyph></Slot>
              <Slot $w={22}><Chev /></Slot>
              <Slot $w={32}><Glyph $size={22}>%</Glyph></Slot>
              <Slot $w={34}><CommaIcon /></Slot>
            </Row>
            <Row>
              <Slot $w={32}><DecimalIcon /></Slot>
              <Slot $w={36}><DecimalIcon more /></Slot>
            </Row>
          </Stack>
        </GroupBody>
        <GroupLabel><LabelText>Number</LabelText><Launcher><LauncherIcon /></Launcher></GroupLabel>
      </Group>

      <Group $w={229}>
        <GroupBody $pad={15}>
          <Stack>
            <Row><Slot $w={22}><CondIcon /></Slot><TextLine $ml={3}>Conditional Formatting <Chev /></TextLine></Row>
            <Row><Slot $w={22}><TableStyleIcon /></Slot><TextLine $ml={3}>Format as Table <Chev /></TextLine></Row>
            <Row><Slot $w={22}><TableStyleIcon fill /></Slot><TextLine $ml={3}>Cell Styles <Chev /></TextLine></Row>
          </Stack>
        </GroupBody>
        <GroupLabel><LabelText>Styles</LabelText></GroupLabel>
      </Group>

      <Group $w={122}>
        <GroupBody $pad={14}>
          <Stack>
            <Row><Slot $w={22}><InsertCellIcon /></Slot><TextLine $ml={4} $w={62}>Insert <Chev /></TextLine></Row>
            <Row><Slot $w={22}><DeleteCellIcon /></Slot><TextLine $ml={4} $w={67}>Delete <Chev /></TextLine></Row>
            <Row><Slot $w={22}><FormatCellIcon /></Slot><TextLine $ml={4} $w={62}>Format <Chev /></TextLine></Row>
          </Stack>
        </GroupBody>
        <GroupLabel><LabelText>Cells</LabelText></GroupLabel>
      </Group>

      <Group $w={185}>
        <GroupBody $pad={13}>
          <Stack>
            <Row><Slot $w={26}><Glyph $size={25}>Σ</Glyph></Slot><Slot $w={20}><Chev /></Slot></Row>
            <Row><Slot $w={26}><FillDownIcon /></Slot><Slot $w={20}><Chev /></Slot></Row>
            <Row><Slot $w={26}><EraserIcon /></Slot><Slot $w={20}><Chev /></Slot></Row>
          </Stack>
          <BigCol $w={58}>
            <BigIcon $h={47}><SortIcon /></BigIcon>
            Sort &amp;
            <TextLine>Filter <Chev /></TextLine>
          </BigCol>
          <BigCol $w={56}>
            <BigIcon $h={47}><FindIcon /></BigIcon>
            Find &amp;
            <TextLine>Select <Chev /></TextLine>
          </BigCol>
        </GroupBody>
        <GroupLabel><LabelText>Editing</LabelText></GroupLabel>
      </Group>

      <Group $w={78}>
        <GroupBody>
          <BigCol $w={77}>
            <BigIcon $h={47}><AddinsIcon /></BigIcon>
            Add-ins
          </BigCol>
        </GroupBody>
        <GroupLabel><LabelText>Add-ins</LabelText></GroupLabel>
      </Group>

      <Group $w={84}>
        <GroupBody>
          <BigCol $w={83}>
            <BigIcon $h={47}><PdfIcon /></BigIcon>
            Create
            <span>a PDF</span>
          </BigCol>
        </GroupBody>
        <GroupLabel><LabelText>Adobe Acr...</LabelText></GroupLabel>
      </Group>

      <Group $w={44} $last>
        <GroupBody />
        <GroupLabel>
          <LabelText><svg width="14" height="8" viewBox="0 0 14 8" fill="none"><path d="M1 7l6-6 6 6" stroke="#dcdcdc" strokeWidth="1.4" /></svg></LabelText>
        </GroupLabel>
      </Group>
    </Ribbon>
  );
}

export default function App() {
  return (
    <>
      <GlobalStyle />
      <Page>
        <TitleBar>
          <Slot $w={20} />
          <Slot $w={20}><ExcelIcon /></Slot>
          <Slot $w={14} />
          <Slot $w={32}><SaveIcon /></Slot>
          <Slot $w={38}><RedoIcon /></Slot>
          <Slot $w={8}><Chev color="#5d6062" /></Slot>
          <Slot $w={36}><RedoIcon flip /></Slot>
          <Slot $w={10}><Chev color="#5d6062" /></Slot>
          <Slot $w={46}><svg width="10" height="12" viewBox="0 0 10 12" fill="none" stroke="#dcdcdc" strokeWidth="1.3"><path d="M0 1.5h10" /><path d="M1 5h8L5 10z" /></svg></Slot>
          <Slot $w={2} />
          <DocTitle>Sales%20Report%20samia%20(1)(AutoRecovered).xlsx  -...</DocTitle>
          <SearchBox><SearchIcon />Search</SearchBox>
          <Avatar><PersonIcon /></Avatar>
          <Slot $w={60} $ml={16}><svg width="14" height="2"><rect width="14" height="1.6" fill="#e8e8e8" /></svg></Slot>
          <Slot $w={59}><svg width="14" height="17" viewBox="0 0 14 17" fill="none" stroke="#e8e8e8" strokeWidth="1.3"><rect x="1" y="4" width="9" height="12" rx="1.5" /><path d="M4 1.5h6a3 3 0 0 1 3 3v8" /></svg></Slot>
          <Slot $w={60}><svg width="14" height="14" viewBox="0 0 14 14" stroke="#e8e8e8" strokeWidth="1.4"><path d="M1 1l12 12M13 1L1 13" /></svg></Slot>
        </TitleBar>

        <TabRow>
          <Tab $gap={32}>File</Tab>
          <Tab $active>Home</Tab>
          <Tab>Insert</Tab>
          <Tab>Page Layout</Tab>
          <Tab>Formulas</Tab>
          <Tab>Data</Tab>
          <Tab>Review</Tab>
          <Tab>View</Tab>
          <Tab>Help</Tab>
          <Tab>Acrobat</Tab>
          <ShareButton><ShareIcon />Share<Chev color="#0c2e1c" /></ShareButton>
        </TabRow>

        <Ribbons />

        <FormulaBar>
          <NameBox>AA40<svg width="12" height="7" viewBox="0 0 12 7" fill="none"><path d="M1 1l5 5 5-5" stroke="#dcdcdc" strokeWidth="1.4" /></svg></NameBox>
          <Slot $w={25}><Dots /></Slot>
          <FxBox>
            <svg width="16" height="16" viewBox="0 0 16 16" stroke="#7b7b7b" strokeWidth="1.3"><path d="M1 1l14 14M15 1L1 15" /></svg>
            <svg width="18" height="14" viewBox="0 0 18 14" fill="none" stroke="#7b7b7b" strokeWidth="1.3"><path d="M1 8l5 5L17 1" /></svg>
            <Glyph $font='"Liberation Serif", serif' $italic $size={21}>fx</Glyph>
          </FxBox>
          <FormulaInput><svg width="13" height="8" viewBox="0 0 13 8" fill="none"><path d="M1 1l5.5 5.5L12 1" stroke="#dcdcdc" strokeWidth="1.4" /></svg></FormulaInput>
        </FormulaBar>

        <ColumnRow>
          <Corner />
          {COLUMNS.map((c) => <ColHead key={c} $on={c === 'AA'}>{c}</ColHead>)}
        </ColumnRow>

        <SheetRow>
          <RowHeads>
            {[...Array(40)].map((_, i) => <RowHead key={i} $on={i === 39}>{i + 1}</RowHead>)}
          </RowHeads>
          <Canvas>
            <DatePanel>
              <SlicerHead title="Date" />
              <DateBody>
                <ButtonList $fill>
                  {DATES.map((d) => <SlicerButton key={d}>{d}</SlicerButton>)}
                </ButtonList>
                <ScrollTrack><ScrollLine /></ScrollTrack>
              </DateBody>
            </DatePanel>
            <CodePanel>
              <CodeTop>
                <SlicerHead title="Code Area" />
                <ButtonList>
                  {AREAS.map((a) => <SlicerButton key={a}>{a}</SlicerButton>)}
                </ButtonList>
              </CodeTop>
              <SlicerHead title="Item" h={18} />
              <ButtonList>
                {ITEMS.map((a) => <SlicerButton key={a}>{a}</SlicerButton>)}
              </ButtonList>
            </CodePanel>
            <ChartGrid>
              <TotalSales />
              <RegionalSales />
              <DailyOverview />
            </ChartGrid>
            <SelectedCell />
          </Canvas>
          <VScroll>
            <Triangle dir="up" />
            <VThumb />
            <Triangle dir="down" />
          </VScroll>
        </SheetRow>

        <SheetTabs>
          <TabStrip>
            <Slot $w={82} $gap={22}><Triangle dir="left" size={4} color="#c4c4c4" /><Triangle dir="right" size={4} color="#c4c4c4" /></Slot>
            <Slot $w={17} />
            <SheetTab $w={74}>Sheet3</SheetTab>
            <SheetTab $w={74}>Sheet4</SheetTab>
            <SheetTab $w={74}>Sheet6</SheetTab>
            <SheetTab $w={142}>Q4 Sales report</SheetTab>
            <SheetTab $w={128} $active>DASHBOARD</SheetTab>
            <Slot $w={57} $justify="flex-end" $pr={5}><PlusCircle /></Slot>
          </TabStrip>
          <HScrollZone>
            <Slot $w={312} $justify="flex-end"><Dots /></Slot>
            <Slot $w={34} $pl={12}><Triangle dir="left" /></Slot>
            <HThumb />
            <Slot $w={56}><Triangle dir="right" /></Slot>
          </HScrollZone>
        </SheetTabs>

        <StatusBar>
          Ready
          <Slot $w={45} $justify="flex-end" $pr={4}><AccessibilityIcon /></Slot>
          <span>Accessibility: Investigate</span>
          <Slot $w={1002} />
          <ViewTab $on>
            <svg width="18" height="16" viewBox="0 0 18 16" fill="none" stroke="#e4e4e4"><path d="M.5.5h17v15H.5zM.5 5.5h17M.5 10.5h17M6.5.5v15M11.5.5v15" /></svg>
          </ViewTab>
          <ViewTab>
            <svg width="18" height="17" viewBox="0 0 18 17" fill="none" stroke="#e4e4e4"><path d="M.5.5h17v16H.5z" /><path d="M5 3.5h8v10H5zM7 6.5h4M7 9h4M7 11.5h4" /></svg>
          </ViewTab>
          <ViewTab>
            <svg width="18" height="17" viewBox="0 0 18 17" fill="none" stroke="#e4e4e4"><path d="M.5.5h17v16H.5zM.5 12.5h10V.5" /></svg>
          </ViewTab>
          <Slot $w={10} $ml={6}><svg width="10" height="2"><rect width="10" height="1.3" fill="#dcdcdc" /></svg></Slot>
          <Slot $w={6} />
          <ZoomTrack><ZoomThumb /><ZoomTick /></ZoomTrack>
          <Slot $w={24}><svg width="11" height="11" viewBox="0 0 11 11" stroke="#dcdcdc" strokeWidth="1.2"><path d="M0 5.5h11M5.5 0v11" /></svg></Slot>
          <ZoomValue>69%</ZoomValue>
        </StatusBar>

        <Watermark>
          <WatermarkArabic>مستقل</WatermarkArabic>
          <WatermarkLatin>mostaql.com</WatermarkLatin>
        </Watermark>
      </Page>
    </>
  );
}
